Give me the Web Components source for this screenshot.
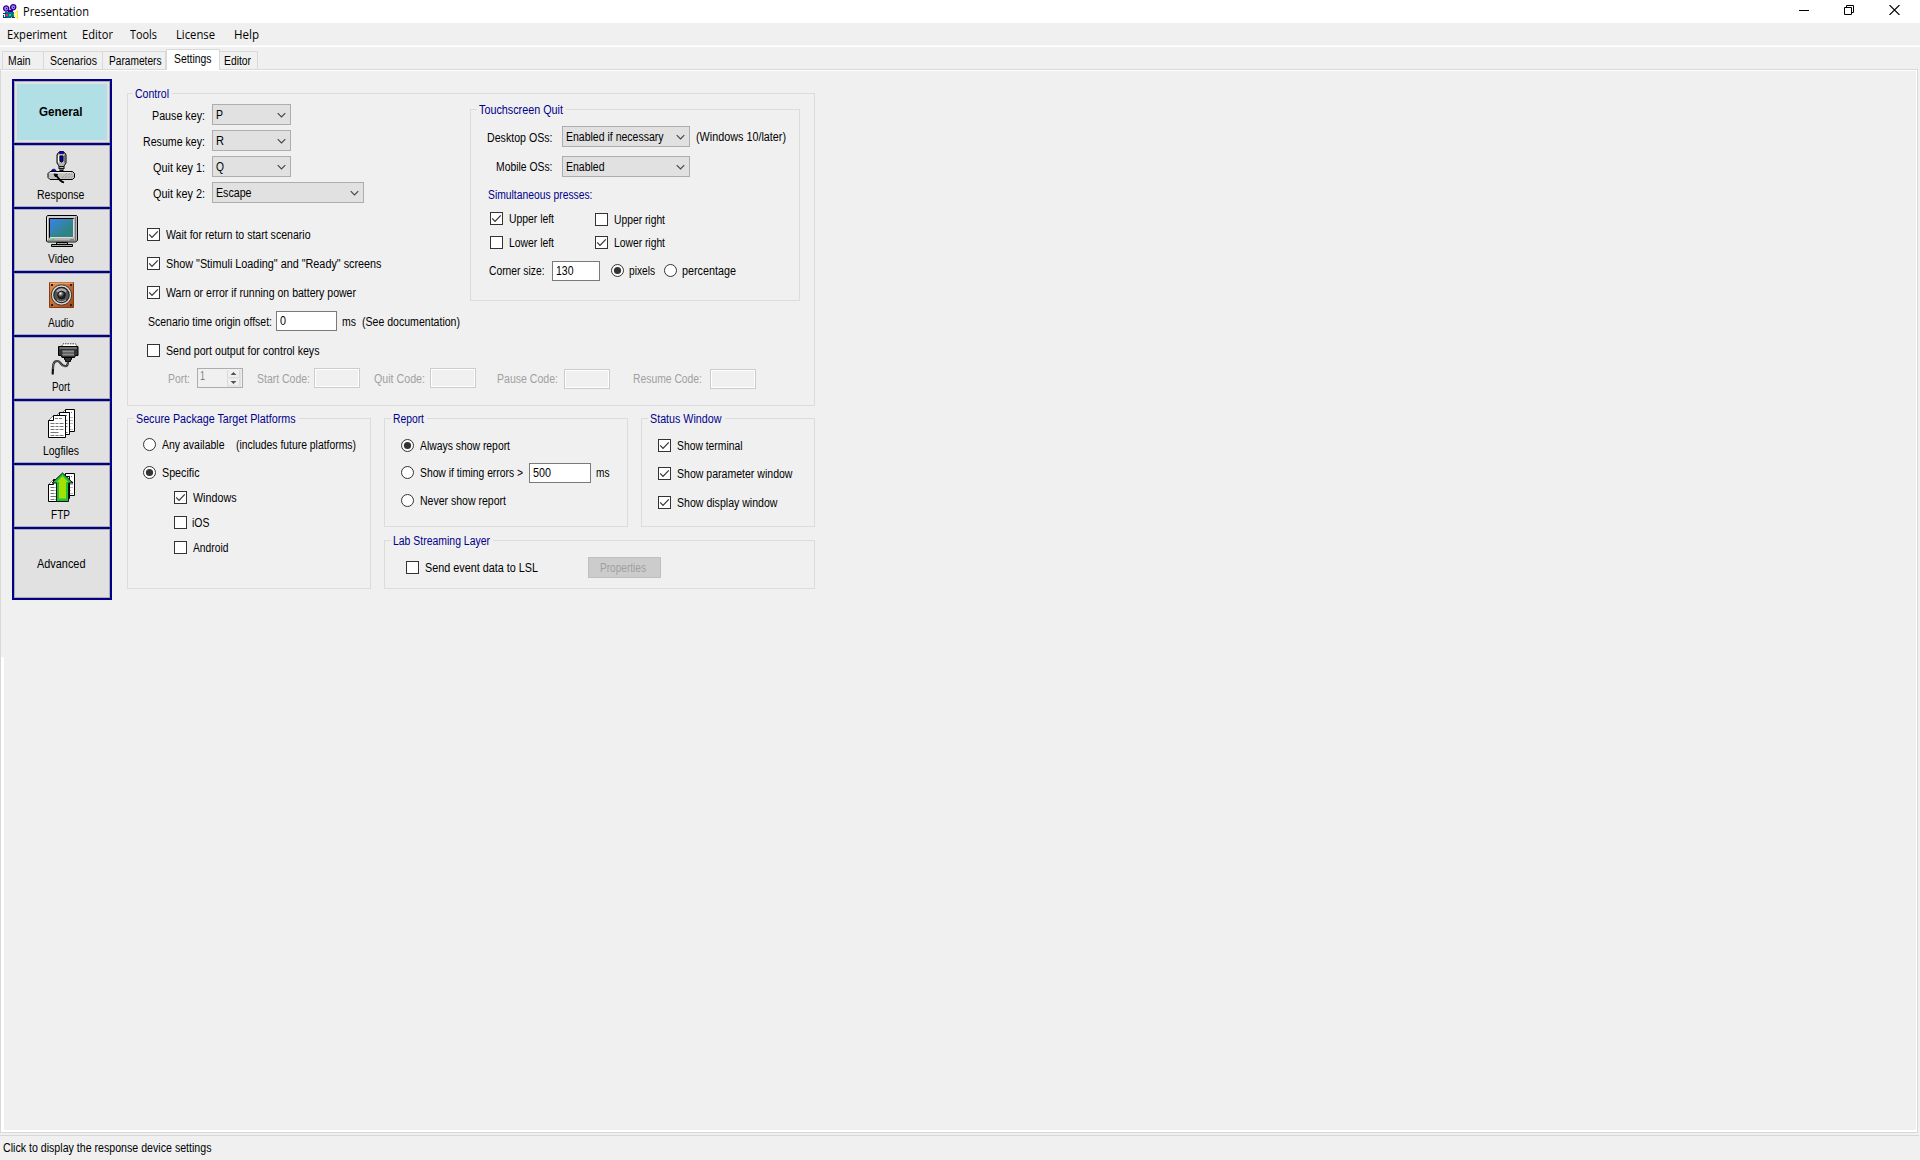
<!DOCTYPE html>
<html lang="en">
<head>
<meta charset="utf-8">
<title>Presentation</title>
<style>
html,body{margin:0;height:100%;background:#f0f0f0;overflow:hidden}
body{font:12px/16px "Liberation Sans",Arial,sans-serif;color:#000}
</style>
</head>
<body>
<app-window></app-window>
<script>
const fitted = [];
const define = (name, html, setup) => customElements.define(name, class extends HTMLElement {
  constructor() {
    super();
    this.attachShadow({mode: 'open'});
  }
  connectedCallback() {
    if (this.ready) return;
    this.ready = true;
    this.style.marginLeft = this.hasAttribute('l') ? this.getAttribute('l') + 'px' : '';
    if (this.hasAttribute('t')) this.style.marginTop = this.getAttribute('t') + 'px';
    this.shadowRoot.innerHTML = typeof html === 'function' ? html(this) : html;
    if (setup) setup(this);
  }
});
const attr = (el, n, d = '') => el.hasAttribute(n) ? el.getAttribute(n) : d;

/* Single-line label squeezed or stretched to a given width */
define('fit-text', el => `<style>
:host{display:block;flex:none;width:${attr(el,'w')}px;height:16px;white-space:nowrap}
span{display:inline-block;transform-origin:0 0}</style><span><slot></slot></span>`,
  el => fitted.push(el));

define('check-box', el => `<style>
:host{display:flex;flex:none;height:16px}
svg{flex:none;margin:1px ${attr(el,'gap','6')}px 0 0;display:block}</style>
<svg width="13" height="13"><rect x=".5" y=".5" width="12" height="12" fill="#fff" stroke="#333"/>
${el.hasAttribute('checked') ? '<path d="M2.2 6.4 5 9.3 10.8 3.4" fill="none" stroke="#333" stroke-width="1.2"/>' : ''}</svg>
<fit-text w="${attr(el,'w')}">${attr(el,'label')}</fit-text>`);

define('radio-button', el => `<style>
:host{display:flex;flex:none;height:16px}
svg{flex:none;margin:1px ${attr(el,'gap','6')}px 0 0;display:block}</style>
<svg width="13" height="13"><circle cx="6.5" cy="6.5" r="6" fill="#fff" stroke="#333"/>
${el.hasAttribute('checked') ? '<circle cx="6.5" cy="6.5" r="3.6" fill="#333"/>' : ''}</svg>
<fit-text w="${attr(el,'w')}">${attr(el,'label')}</fit-text>`);

define('combo-box', el => `<style>
:host{display:flex;flex:none;box-sizing:border-box;width:${attr(el,'w')}px;height:21px;border:1px solid #adadad;background:#e1e1e1;padding:2px 4px 0 3px;justify-content:space-between}
svg{display:block;margin-top:4px}</style>
<fit-text w="${attr(el,'tw')}">${attr(el,'value')}</fit-text>
<svg width="9" height="9"><path d="M.7 2.2 4.5 6 8.3 2.2" fill="none" stroke="#444" stroke-width="1.1"/></svg>`);

define('text-field', el => `<style>
:host{display:block;flex:none;box-sizing:border-box;width:${attr(el,'w')}px;height:20px;border:1px solid #7a7a7a;background:#fff;padding:1px 0 0 3px}
:host([disabled]){border-color:#ccc;background:#f0f0f0;box-shadow:inset 0 0 0 1px #fff}</style>
${el.hasAttribute('value') ? `<fit-text w="${attr(el,'tw')}">${attr(el,'value')}</fit-text>` : ''}`);

define('spin-field', el => `<style>
:host{display:flex;flex:none;box-sizing:border-box;width:46px;height:20px;border:1px solid #adadad;background:#f0f0f0;padding:0 1px 0 2px;justify-content:space-between;color:#808080}
svg{display:block}</style><fit-text t="-1" w="5">${attr(el,'value')}</fit-text>
<svg width="14" height="18"><path d="M.5 1v7.500h12V1M.5 10v7h12v-7" fill="none" stroke="#dadada"/><path d="M0 9h14M13.500 1v17" stroke="#e0e0e0"/><path d="M3.500 6 6.500 3l3 3zM3.500 12h6l-3 3z" fill="#555"/></svg>`);

define('push-button', el => `<style>
:host{display:block;flex:none;box-sizing:border-box;width:73px;height:21px;border:1px solid #bfbfbf;background:#ccc;color:#a0a0a0;padding:2px 0 0 11px}</style>
<fit-text w="46"><slot></slot></fit-text>`);

define('form-row', el => `<style>
:host{display:flex;align-items:flex-start;height:${attr(el,'h','16')}px}</style><slot></slot>`);

define('group-box', el => `<style>
:host{display:block;flex:none;box-sizing:border-box;width:${attr(el,'w')}px;height:${attr(el,'h')}px;border:1px solid #dcdcdc}
.legend{display:flex;width:max-content;height:16px;margin:-8px 0 -8px ${attr(el,'lm','6')}px;padding:0 3px 0 2px;background:#f0f0f0;color:#00008b}</style>
<div class="legend"><fit-text w="${attr(el,'tw')}">${attr(el,'legend')}</fit-text></div><slot></slot>`);

const page = (x, y, w, h) =>
  `<path d="M${x+5} ${y+.5}h${w-5}v${h}h-${w}V${y+5.5}z" fill="#fff" stroke="#000"/><path d="M${x+5} ${y+.5}v5h-5" fill="#fff" stroke="#000"/>` +
  `<path d="M${x+6.5} ${y+3.5}h${w-9}" stroke="#777" stroke-dasharray="3 1"/><path d="M${x+2} ${y+8.5}h${w-4}m-${w-4} 3h${w-4}m-${w-4} 3h${w-4}m-${w-4} 6h${w-4}" stroke="#777" stroke-dasharray="4 1 3 1 5 1"/><path d="M${x+2} ${y+17.5}h8" stroke="#777"/>`;
const pages = page(12.5,1,14,22) + page(6.5,4,15,22) + page(.5,7,17,22);
const icons = {
  response: [32,`<path d="M14 18v-3l-2-3V4l1-2 2-1h3l2 1 1 2v8l-2 3v3z" fill="#b4b4b4" stroke="#000"/><path d="M13.500 4.500v7" stroke="#fff"/><path d="M19.500 4v8" stroke="#777"/><path d="M14.500.5h4v2h-4z" fill="#0000e0" stroke="#000060" stroke-width=".8"/><path d="M15 5h3v5l-1 1h-1l-1-1z" fill="#0000d8" stroke="#000"/><path d="M14 15.500h5M14.500 17.500h4M14.500 19.500h4" stroke="#111"/><path d="M5 20.500h22.500l2 2v4l-2 2H5l-2-2v-4z" fill="#c0c0c0" stroke="#000"/><path d="M5 21.700h21" stroke="#f0f0f0"/><path d="m17 27 5-5M20 27l5-5M23 27l4-4M26 27l2-2" stroke="#888" stroke-dasharray="1 1"/><path d="M6.500 20c0-2.500 4.500-2.500 4.500 0z" fill="#0000e0" stroke="#000060" stroke-width=".6"/><path d="m9 23 3.500.5-2 2.500z" stroke="#000"/><path d="M11 24c2 2 3 6 8 7.500" fill="none" stroke="#000" stroke-width="1.800"/>`],
  video: [32,`<defs><linearGradient id="s" x1="0" y1="0" x2="1" y2="1"><stop stop-color="#3884ee"/><stop offset=".7" stop-color="#318383"/></linearGradient></defs><path d="M1.500.5h29l1 1v24l-2 1.500h-28l-1-1v-24z" fill="#b4b4b4" stroke="#000"/><path d="M1.500 25V2h28" fill="none" stroke="#e8e8e8"/><path d="M29.500 2v24H2" fill="none" stroke="#777"/><path d="M3.500 3.500h24v19h-24z" fill="url(#s)" stroke="#000"/><path d="M27.500 4v18.500H4" fill="none" stroke="#ddd"/><path d="M6 24h2v1.500H6z" fill="#0f0"/><path d="M24 24h4v2h-4z" fill="#888"/><path d="M10.500 27.500h11v2h-11zM5.500 29.500h21v2h-21z" fill="#aaa" stroke="#000"/>`],
  audio: [26,`<defs><linearGradient id="w" x1="0" y1="0" x2="1" y2="1"><stop stop-color="#e99153"/><stop offset="1" stop-color="#9b4718"/></linearGradient><radialGradient id="c" cx=".35" cy=".3"><stop stop-color="#fff"/><stop offset=".5" stop-color="#777"/><stop offset="1" stop-color="#222"/></radialGradient></defs><path d="M.5.5h24v25H.5z" fill="url(#w)" stroke="#843a12"/><path d="M1 1h23" stroke="#f6bb8d"/><path d="M2 2h2v2H2zM21 2h2v2h-2zM2 22h2v2H2zM21 22h2v2h-2z" fill="#222"/><circle cx="12.500" cy="13" r="10.200" fill="#d8d8d8" stroke="#4a3528"/><circle cx="12.500" cy="13" r="7.700" fill="#555" stroke="#222" stroke-width="1.200"/><path d="M7 9a7 7 0 0 1 11 0l-5.500 4z" fill="#aaa"/><circle cx="12.500" cy="13" r="3.800" fill="url(#c)" stroke="#111"/><path d="M8 18a7 7 0 0 0 9 0" fill="none" stroke="#bbb"/>`],
  port: [32,`<path d="M10.500 3.500 12 .8h12.500l1.500 2.700z" fill="#fff" stroke="#333" stroke-dasharray="1.500 1"/><path d="M7.500 3.500h19.500v9h-2.500l-1 2H11l-1-2H7.500z" fill="#333" stroke="#000"/><path d="M8.500 5h17.500" stroke="#aaa"/><path d="M11.500 7h11.500v6h-11.500z" fill="#666"/><path d="M11.500 8.500h11.500M11.500 11.500h11.500" stroke="#999" stroke-width=".8"/><path d="M13.500 14.500h7v2h-1v2h-5v-2h-1z" fill="#333" stroke="#000"/><path id="k" d="M17 18.700c0 3-.5 4.500-3 4.500-4.500 0-4-5.200-7.500-5.200-4.500 0-4.500 3-4.800 13.500" fill="none" stroke="#111" stroke-width="2.200"/><path d="M17 18.700c0 3-.5 4.500-3 4.500-4.500 0-4-5.200-7.500-5.200-4 0-4.200 2-4.500 8" fill="none" stroke="#999" stroke-width=".8"/>`],
  logfiles: [30, `<g transform="translate(1)">${pages}</g>`],
  ftp: [30, `<g transform="translate(1)">${pages}</g><path d="M15.500 1 26 11H21.500V29.500H9.500V11H5z" fill="#1fc040" stroke="#111"/><path d="M15.500 4 21 10H19V26.500H12V10H10z" fill="#a4e000"/>`],
};
define('side-icon', el => {
  const [h, body] = icons[attr(el,'name')];
  return `<style>:host{display:block;width:32px;height:${h}px}svg{display:block;overflow:visible}</style><svg width="32" height="${h}" fill="#000">${body}</svg>`;
});

/* Sidebar button: optional icon above its label */
define('side-button', el => `<style>
:host{display:block;box-sizing:border-box;width:96px;height:${attr(el,'h','62')}px;border:1px solid #adadad;background:#e1e1e1;overflow:hidden}
:host([active]){padding:2px}
.in{display:flow-root}
:host([active]) .in{background:#b0e0e6;height:56px;font-weight:bold}
side-icon{margin:${attr(el,'iy')}px 0 0 ${attr(el,'ix')}px}</style>
<div class="in">${el.hasAttribute('icon') ? `<side-icon name="${attr(el,'icon')}" t="${attr(el,'iy')}" l="${attr(el,'ix')}"></side-icon>` : ''}<fit-text t="${attr(el,'ty')}" l="${attr(el,'tx')}" w="${attr(el,'w')}"><slot></slot></fit-text></div>`);

define('side-bar', `<style>
:host{display:flex;flex:none;flex-direction:column;gap:2px;box-sizing:border-box;width:100px;height:521px;padding:2px;background:#00008b}</style>
<side-button active tx="22" ty="20" w="43.500">General</side-button>
<side-button icon="response" ix="30" iy="5" tx="22" ty="4" w="47.500">Response</side-button>
<side-button icon="video" ix="31" iy="5" tx="33" ty="4" w="26">Video</side-button>
<side-button icon="audio" ix="34" iy="8" tx="33" ty="7" w="26">Audio</side-button>
<side-button icon="port" ix="36" iy="5" tx="37" ty="4" w="18">Port</side-button>
<side-button icon="logfiles" ix="32" iy="6" tx="28" ty="5" w="36">Logfiles</side-button>
<side-button icon="ftp" ix="32" iy="6" tx="36" ty="5" w="19">FTP</side-button>
<side-button h="69" tx="22" ty="26" w="48.500">Advanced</side-button>`);

define('title-bar', `<style>
:host{display:flex;height:23px;background:#fff;font:12px/16px "Open Sans",sans-serif}
.logo{margin:4px 5px 0 3px}
.ctl{margin:5px 20px 0 auto;display:flex;gap:35px}</style>
<svg class="logo" width="15" height="15"><path d="M2 8h9v5H9l-1 1H4l-2-1z" fill="#007090"/><path d="M0 9.500h3M.5 11v3M1 13.500h3M9 13.500h3" stroke="#063a63" fill="none"/><circle cx="3.200" cy="4.500" r="2.600" fill="#a080ff" stroke="#30008c" stroke-width="1.300"/><circle cx="10.200" cy="3.300" r="2.600" fill="#a080ff" stroke="#30008c" stroke-width="1.300"/><path d="M3 4h1v1H3zM10 3h1v1h-1zM5 6h5v2H5z" fill="#30008c"/><path d="M3 10h2v2H3z" fill="#ff2050"/><path d="M6 10h2v2H6z" fill="#00e070"/><path d="m11 10.500 3.500-4v8z" fill="#fff" stroke="#fff000"/></svg>
<fit-text t="4" w="66">Presentation</fit-text>
<div class="ctl"><svg width="10" height="10"><path d="M0 5.500h10" stroke="#000"/></svg>
<svg width="10" height="10"><path d="M.5 2.500h7v7h-7zM2.500 2V.5h7v7H8" fill="none" stroke="#000"/></svg>
<svg width="11" height="10"><path d="M.5 0 10.500 10M10.500 0 .5 10" stroke="#000" stroke-width="1.100"/></svg></div>`);

define('menu-bar', `<style>
:host{display:flex;box-sizing:border-box;height:24px;padding:4px 0 0 7px;border-bottom:1px solid #fff;font:12px/16px "Open Sans",sans-serif;box-shadow:inset 0 -1px #f8f8f8}</style>
<fit-text w="60">Experiment</fit-text><fit-text l="15" w="31">Editor</fit-text><fit-text l="17" w="27">Tools</fit-text><fit-text l="19" w="39">License</fit-text><fit-text l="19" w="25">Help</fit-text>`);

define('tab-item', el => `<style>
:host{display:block;flex:none;box-sizing:border-box;width:${attr(el,'tw')}px;height:18px;border:1px solid #d9d9d9;border-width:1px 1px 0 0;padding:1px 0 0 ${attr(el,'p')}px}
:host([first]){border-left-width:1px}
:host([active]){height:21px;background:#fff;border-width:1px;border-bottom:0;margin-bottom:-1px;z-index:1}</style><fit-text w="${attr(el,'w')}"><slot></slot></fit-text>`);
define('tab-strip', `<style>
:host{display:flex;align-items:flex-end;height:22px;padding-left:2px}</style>
<tab-item first tw="42" p="5" w="22.500">Main</tab-item><tab-item tw="59" p="6" w="47">Scenarios</tab-item><tab-item tw="63" p="6" w="52.500">Parameters</tab-item><tab-item active tw="54" p="7" w="37.500">Settings</tab-item><tab-item tw="38" p="4" w="27">Editor</tab-item>`);

define('control-group', `<style>
:host{display:block}
.top{display:flex;height:265px}.left{flex:none;width:342px}
fit-text,form-row{flex:none}.off{color:#a0a0a0}</style>
<group-box w="688" h="313" legend="Control" lm="5" tw="34">
<div class="top"><div class="left">
<form-row t="10" h="21"><fit-text l="24" t="4" w="53">Pause key:</fit-text><combo-box l="7" w="79" value="P" tw="7"></combo-box></form-row>
<form-row t="5" h="21"><fit-text l="15" t="4" w="62">Resume key:</fit-text><combo-box l="7" w="79" value="R" tw="8"></combo-box></form-row>
<form-row t="5" h="21"><fit-text l="25" t="4" w="52">Quit key 1:</fit-text><combo-box l="7" w="79" value="Q" tw="8"></combo-box></form-row>
<form-row t="5" h="21"><fit-text l="25" t="4" w="52">Quit key 2:</fit-text><combo-box l="7" w="152" value="Escape" tw="35.500"></combo-box></form-row>
<form-row t="24"><check-box l="19" checked w="144.500" label="Wait for return to start scenario"></check-box></form-row>
<form-row t="13"><check-box l="19" checked w="215.500" label="Show &quot;Stimuli Loading&quot; and &quot;Ready&quot; screens"></check-box></form-row>
<form-row t="13"><check-box l="19" checked w="190" label="Warn or error if running on battery power"></check-box></form-row>
<form-row t="10" h="20"><fit-text l="20" t="3" w="124">Scenario time origin offset:</fit-text><text-field l="4" w="61" value="0" tw="6"></text-field><fit-text l="5" t="3" w="14">ms</fit-text><fit-text l="6" t="3" w="98">(See documentation)</fit-text></form-row>
<form-row t="12"><check-box l="19" w="153.500" label="Send port output for control keys"></check-box></form-row>
</div>
<group-box t="15" w="330" h="192" legend="Touchscreen Quit" lm="6" tw="84">
<form-row t="16" h="21"><fit-text l="16" t="4" w="65.500">Desktop OSs:</fit-text><combo-box l="9.500" w="128" value="Enabled if necessary" tw="97.500"></combo-box><fit-text l="6" t="3" w="90">(Windows 10/later)</fit-text></form-row>
<form-row t="9" h="21"><fit-text l="25" t="3" w="56.500">Mobile OSs:</fit-text><combo-box l="9.500" w="128" value="Enabled" tw="38.500"></combo-box></form-row>
<form-row t="10" style="color:#00008b"><fit-text l="17" w="104.500">Simultaneous presses:</fit-text></form-row>
<form-row t="8"><check-box l="19" checked w="45" label="Upper left"></check-box><check-box l="41" t="1" w="51" label="Upper right"></check-box></form-row>
<form-row t="8"><check-box l="19" w="45" label="Lower left"></check-box><check-box l="41" checked w="51" label="Lower right"></check-box></form-row>
<form-row t="10" h="20"><fit-text l="18" t="2" w="55.500">Corner size:</fit-text><text-field l="7.500" w="48" value="130" tw="17.500"></text-field><radio-button l="11" t="2" gap="5" checked w="26" label="pixels"></radio-button><radio-button l="9" t="2" gap="5" w="54" label="percentage"></radio-button></form-row>
</group-box></div>
<form-row class="off" t="9" h="20"><fit-text l="40" t="3" w="22">Port:</fit-text><spin-field l="7" value="1"></spin-field><fit-text l="14" t="3" w="53">Start Code:</fit-text><text-field disabled l="4" w="46"></text-field><fit-text l="14" t="3" w="51">Quit Code:</fit-text><text-field disabled l="5" w="46"></text-field><fit-text l="21" t="3" w="61">Pause Code:</fit-text><text-field disabled l="6" t="1" w="46"></text-field><fit-text l="23" t="3" w="69">Resume Code:</fit-text><text-field disabled l="8" t="1" w="46"></text-field></form-row>
</group-box>`);

define('platform-group', `<style>:host{display:block}</style>
<group-box w="244" h="171" legend="Secure Package Target Platforms" tw="159.500">
<form-row t="18"><radio-button l="15" w="62.500" label="Any available"></radio-button><fit-text l="11.500" w="120">(includes future platforms)</fit-text></form-row>
<form-row t="12"><radio-button l="15" checked w="37.500" label="Specific"></radio-button></form-row>
<form-row t="9"><check-box l="46" checked w="43.500" label="Windows"></check-box></form-row>
<form-row t="9"><check-box l="46" gap="5" w="17.500" label="iOS"></check-box></form-row>
<form-row t="9"><check-box l="46" w="35.500" label="Android"></check-box></form-row>
</group-box>`);

define('report-group', `<style>:host{display:block}</style>
<group-box w="244" h="109" legend="Report" tw="31">
<form-row t="19"><radio-button l="16" checked w="90" label="Always show report"></radio-button></form-row>
<form-row t="9" h="20"><radio-button l="16" t="2" w="103" label="Show if timing errors &gt;"></radio-button><text-field l="6" w="62" value="500" tw="18"></text-field><fit-text l="5" t="2" w="13.500">ms</fit-text></form-row>
<form-row t="10"><radio-button l="16" w="86" label="Never show report"></radio-button></form-row>
</group-box>`);

define('status-group', `<style>:host{display:block}</style>
<group-box w="174" h="109" legend="Status Window" tw="71.500">
<form-row t="19"><check-box l="16" checked w="65.500" label="Show terminal"></check-box></form-row>
<form-row t="12"><check-box l="16" checked w="115.500" label="Show parameter window"></check-box></form-row>
<form-row t="13"><check-box l="16" checked w="100.500" label="Show display window"></check-box></form-row>
</group-box>`);

define('lsl-group', `<style>:host{display:block}</style>
<group-box w="431" h="49" legend="Lab Streaming Layer" tw="97">
<form-row t="16" h="21"><check-box l="21" t="3" w="113" label="Send event data to LSL"></check-box><push-button l="50">Properties</push-button></form-row>
</group-box>`);

define('settings-page', `<style>
:host{display:flex;box-sizing:border-box;width:1918px;height:1064px;border:1px solid #d9d9d9;padding-top:9px;
background:linear-gradient(#fff,#fff) 0 0/100% 1px no-repeat,linear-gradient(#fff,#fff) 100% 0/1px 100% no-repeat,linear-gradient(#fff,#fff) 0 100%/100% 2px no-repeat,linear-gradient(#fff,#fff) 0 587px/3px 475px no-repeat}
side-bar{margin-left:11px}
.groups{margin:14px 0 0 15px}
.low{display:flex;gap:13px;margin-top:12px}
.right{display:flex;flex-direction:column;gap:13px}
.pair{display:flex;gap:13px}</style>
<side-bar></side-bar>
<div class="groups"><control-group></control-group>
<div class="low"><platform-group></platform-group><div class="right"><div class="pair"><report-group></report-group><status-group></status-group></div><lsl-group></lsl-group></div></div></div>`);

define('status-bar', `<style>
:host{display:block;box-sizing:border-box;width:1919px;height:25px;margin-top:2px;border-top:1px solid #d7d7d7;padding:4px 0 0 3px}</style>
<fit-text w="208.500">Click to display the response device settings</fit-text>`);

define('app-window', `<style>
:host{display:flex;flex-direction:column;width:1920px;height:1160px;background:#f0f0f0}
:host>*{flex:none}</style>
<title-bar></title-bar><menu-bar></menu-bar><tab-strip></tab-strip><settings-page></settings-page><status-bar></status-bar>`);

for (const el of fitted) {
  const span = el.shadowRoot.querySelector('span');
  const natural = span.getBoundingClientRect().width;
  if (natural) span.style.transform = `scaleX(${attr(el,'w') / natural})`;
}
</script>
</body>
</html>
